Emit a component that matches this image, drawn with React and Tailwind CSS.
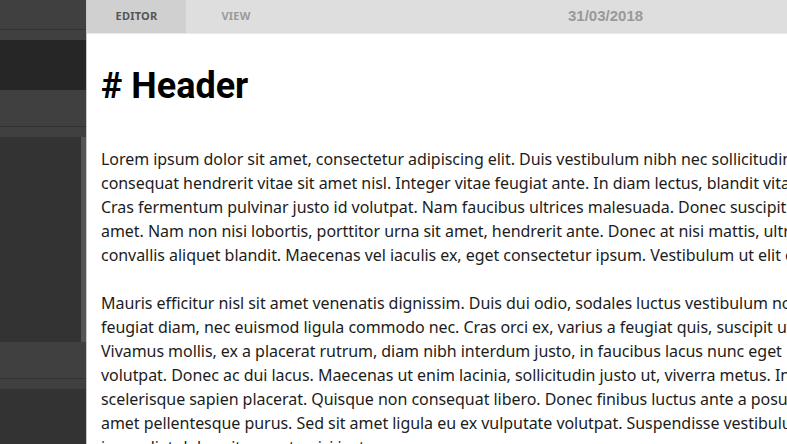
import React from 'react';

const para1 = [
  'Lorem ipsum dolor sit amet, consectetur adipiscing elit. Duis vestibulum nibh nec sollicitudin tempus. Aenean',
  'consequat hendrerit vitae sit amet nisl. Integer vitae feugiat ante. In diam lectus, blandit vitae mauris at,',
  'Cras fermentum pulvinar justo id volutpat. Nam faucibus ultrices malesuada. Donec suscipit tortor sit',
  'amet. Nam non nisi lobortis, porttitor urna sit amet, hendrerit ante. Donec at nisi mattis, ultricies',
  'convallis aliquet blandit. Maecenas vel iaculis ex, eget consectetur ipsum. Vestibulum ut elit et',
];

const para2 = [
  'Mauris efficitur nisl sit amet venenatis dignissim. Duis dui odio, sodales luctus vestibulum non,',
  'feugiat diam, nec euismod ligula commodo nec. Cras orci ex, varius a feugiat quis, suscipit ut',
  'Vivamus mollis, ex a placerat rutrum, diam nibh interdum justo, in faucibus lacus nunc eget',
  'volutpat. Donec ac dui lacus. Maecenas ut enim lacinia, sollicitudin justo ut, viverra metus. In',
  'scelerisque sapien placerat. Quisque non consequat libero. Donec finibus luctus ante a posuere',
  'amet pellentesque purus. Sed sit amet ligula eu ex vulputate volutpat. Suspendisse vestibulum',
  'imperdiet dolor, vitae porta nisi justo ac eros.',
];

function SideBlock({ tall, children }) {
  return (
    <div className="flex flex-col">
      <div className={`${tall} bg-[#404040] border-b border-[#333333]`} />
      <div className="h-[10px] bg-[#404040]" />
      {children}
    </div>
  );
}

function Sidebar() {
  return (
    <aside className="w-[87px] shrink-0 flex flex-col bg-[#333333] border-r border-[#c9c9c9]">
      <SideBlock tall="h-[30px]">
        <div className="h-[50px] bg-[#262626]" />
      </SideBlock>
      <SideBlock tall="h-[37px]">
        <div className="h-[205px] flex justify-end">
          <div className="w-[5px] bg-[#555555]" />
        </div>
      </SideBlock>
      <SideBlock tall="h-[37px]">
        <div className="flex-1 flex justify-end">
          <div className="w-[5px] bg-[#555555]" />
        </div>
      </SideBlock>
    </aside>
  );
}

export default function App() {
  return (
    <div className="w-[787px] h-[444px] overflow-hidden flex bg-white">
      <Sidebar />
      <main className="flex-1 min-w-0 flex flex-col">
        <div className="h-[34px] shrink-0 flex bg-[#dedede] border-b border-[#e9e9e9] font-['Noto_Sans',sans-serif] text-[11px] font-bold tracking-[0.02em]">
          <div className="w-[99px] flex items-center justify-center bg-[#d0d0d0] text-[#555555]">EDITOR</div>
          <div className="w-[100px] flex items-center justify-center text-[#9a9a9a]">VIEW</div>
          <div className="ml-[282px] flex items-center font-['Liberation_Sans',Arial,sans-serif] text-[15px] text-[#999999] tracking-normal">
            31/03/2018
          </div>
        </div>
        <div className="flex-1 overflow-hidden pl-[14px] pt-[28px] font-['Noto_Sans',sans-serif] text-[#1c1c1c]">
          <h1 className="font-['Roboto',sans-serif] text-[36px] leading-[48px] font-bold text-black"># Header</h1>
          <div className="mt-[37px] text-[16px] leading-[24px] whitespace-nowrap tracking-[-0.003em]">
            {para1.map((l) => (
              <div key={l}>{l}</div>
            ))}
            <div className="h-[24px]" />
            {para2.map((l) => (
              <div key={l}>{l}</div>
            ))}
          </div>
        </div>
      </main>
    </div>
  );
}
